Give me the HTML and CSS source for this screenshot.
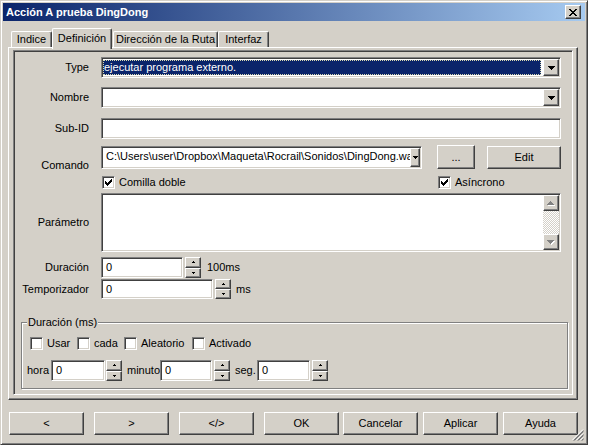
FILE: index.html
```html
<!DOCTYPE html>
<html lang="es">
<head>
<meta charset="utf-8">
<title>Acción A prueba DingDong</title>
<link rel="stylesheet" href="styles.css">
</head>
<body>
<div class="window">
  <div class="titlebar">
    <span class="title">Acción A prueba DingDong</span>
    <span class="close raised"><svg width="8" height="7" viewBox="0 0 8 7"><path d="M0 0h2v1H0zM6 0h2v1H6zM1 1h2v1H1zM5 1h2v1H5zM2 2h4v1H2zM3 3h2v1H3zM2 4h4v1H2zM1 5h2v1H1zM5 5h2v1H5zM0 6h2v1H0zM6 6h2v1H6z"/></svg></span>
  </div>

  <div class="tabs">
    <div class="tab w-ind">Indice</div>
    <div class="tab sel w-def">Definición</div>
    <div class="tab w-dir">Dirección de la Ruta</div>
    <div class="tab w-int">Interfaz</div>
  </div>

  <div class="panel raised">
    <div class="page">
      <div class="row h21">
        <div class="lbl">Type</div>
        <div class="combo sunken w460">
          <div class="combo-val selected"><span class="focus">ejecutar programa externo.</span></div>
          <div class="drop raised"><svg width="7" height="4" viewBox="0 0 7 4"><path d="M0 0h7v1H0zM1 1h5v1H1zM2 2h3v1H2zM3 3h1v1H3z"/></svg></div>
        </div>
      </div>

      <div class="row h21 mt9">
        <div class="lbl">Nombre</div>
        <div class="combo sunken w460">
          <div class="combo-val"></div>
          <div class="drop raised"><svg width="7" height="4" viewBox="0 0 7 4"><path d="M0 0h7v1H0zM1 1h5v1H1zM2 2h3v1H2zM3 3h1v1H3z"/></svg></div>
        </div>
      </div>

      <div class="row h21 mt10">
        <div class="lbl">Sub-ID</div>
        <div class="field sunken w460"></div>
      </div>

      <div class="row h24 mt6">
        <div class="lbl lbl-low">Comando</div>
        <div class="combo sunken cmd">
          <div class="combo-val path">C:\Users\user\Dropbox\Maqueta\Rocrail\Sonidos\DingDong.wav</div>
          <div class="drop narrow raised"><svg width="5" height="3" viewBox="0 0 5 3"><path d="M0 0h5v1H0zM1 1h3v1H1zM2 2h1v1H2z"/></svg></div>
        </div>
        <div class="btn raised dots">...</div>
        <div class="btn raised edit">Edit</div>
      </div>

      <div class="row h15 mt6 indent">
        <div class="check w-comilla"><span class="cb sunken"><svg width="7" height="7" viewBox="0 0 7 7"><path d="M0 2h1v3H0zM1 3h1v3H1zM2 4h1v3H2zM3 3h1v3H3zM4 2h1v3H4zM5 1h1v3H5zM6 0h1v3H6z"/></svg></span><span>Comilla doble</span></div>
        <div class="check"><span class="cb sunken"><svg width="7" height="7" viewBox="0 0 7 7"><path d="M0 2h1v3H0zM1 3h1v3H1zM2 4h1v3H2zM3 3h1v3H3zM4 2h1v3H4zM5 1h1v3H5zM6 0h1v3H6z"/></svg></span><span>Asíncrono</span></div>
      </div>

      <div class="row h59 mt3">
        <div class="lbl">Parámetro</div>
        <div class="textarea sunken w460">
          <div class="vscroll">
            <div class="sb-btn raised"><svg width="8" height="5" viewBox="0 0 8 5"><path fill="#fff" d="M4 1h1v1H4zM3 2h3v1H3zM2 3h5v1H2zM1 4h7v1H1z"/><path fill="#808080" d="M3 0h1v1H3zM2 1h3v1H2zM1 2h5v1H1zM0 3h7v1H0z"/></svg></div>
            <div class="sb-track"></div>
            <div class="sb-btn raised"><svg width="8" height="5" viewBox="0 0 8 5"><path fill="#fff" d="M1 1h7v1H1zM2 2h5v1H2zM3 3h3v1H3zM4 4h1v1H4z"/><path fill="#808080" d="M0 0h7v1H0zM1 1h5v1H1zM2 2h3v1H2zM3 3h1v1H3z"/></svg></div>
          </div>
        </div>
      </div>

      <div class="row h21 mt5">
        <div class="lbl">Duración</div>
        <div class="field sunken w82">0</div>
        <div class="spin ml2">
          <div class="spin-btn raised"><svg width="3" height="2" viewBox="0 0 3 2"><path d="M1 0h1v1H1zM0 1h3v1H0z"/></svg></div>
          <div class="spin-btn raised"><svg width="3" height="2" viewBox="0 0 3 2"><path d="M0 0h3v1H0zM1 1h1v1H1z"/></svg></div>
        </div>
        <span class="unit ml6">100ms</span>
      </div>

      <div class="row h20 mt1">
        <div class="lbl">Temporizador</div>
        <div class="field sunken w112">0</div>
        <div class="spin ml2">
          <div class="spin-btn raised"><svg width="3" height="2" viewBox="0 0 3 2"><path d="M1 0h1v1H1zM0 1h3v1H0z"/></svg></div>
          <div class="spin-btn raised"><svg width="3" height="2" viewBox="0 0 3 2"><path d="M0 0h3v1H0zM1 1h1v1H1z"/></svg></div>
        </div>
        <span class="unit ml5">ms</span>
      </div>

      <div class="group">
        <span class="group-title">Duración (ms)</span>
        <div class="row h13 mt14 gpad-checks">
          <div class="check w47"><span class="cb sunken"></span><span>Usar</span></div>
          <div class="check w47"><span class="cb sunken"></span><span>cada</span></div>
          <div class="check w68"><span class="cb sunken"></span><span>Aleatorio</span></div>
          <div class="check"><span class="cb sunken"></span><span>Activado</span></div>
        </div>
        <div class="row h21 mt10 gpad-inputs">
          <span class="glbl w24">hora</span>
          <div class="field sunken w54">0</div>
          <div class="spin ml1">
            <div class="spin-btn raised"><svg width="3" height="2" viewBox="0 0 3 2"><path d="M1 0h1v1H1zM0 1h3v1H0z"/></svg></div>
            <div class="spin-btn raised"><svg width="3" height="2" viewBox="0 0 3 2"><path d="M0 0h3v1H0zM1 1h1v1H1z"/></svg></div>
          </div>
          <span class="glbl ml5 w33">minuto</span>
          <div class="field sunken w52">0</div>
          <div class="spin ml2">
            <div class="spin-btn raised"><svg width="3" height="2" viewBox="0 0 3 2"><path d="M1 0h1v1H1zM0 1h3v1H0z"/></svg></div>
            <div class="spin-btn raised"><svg width="3" height="2" viewBox="0 0 3 2"><path d="M0 0h3v1H0zM1 1h1v1H1z"/></svg></div>
          </div>
          <span class="glbl ml5 w22">seg.</span>
          <div class="field sunken w53">0</div>
          <div class="spin ml2">
            <div class="spin-btn raised"><svg width="3" height="2" viewBox="0 0 3 2"><path d="M1 0h1v1H1zM0 1h3v1H0z"/></svg></div>
            <div class="spin-btn raised"><svg width="3" height="2" viewBox="0 0 3 2"><path d="M0 0h3v1H0zM1 1h1v1H1z"/></svg></div>
          </div>
        </div>
      </div>
    </div>
  </div>

  <div class="btnrow">
    <div class="bgrp">
      <div class="btn raised bbtn">&lt;</div>
      <div class="btn raised bbtn">&gt;</div>
      <div class="btn raised bbtn">&lt;/&gt;</div>
      <div class="btn raised bbtn">OK</div>
    </div>
    <div class="bgrp2">
      <div class="btn raised bbtn">Cancelar</div>
      <div class="btn raised bbtn">Aplicar</div>
      <div class="btn raised bbtn">Ayuda</div>
    </div>
  </div>

  <svg class="grip" width="12" height="12" viewBox="0 0 12 12">
    <path d="M11 0.5L0.5 11 M11 4.5L4.5 11 M11 8.5L8.5 11" stroke="#fff" fill="none"/>
    <path d="M11.5 1.5L1.5 11.5 M11.5 2.5L2.5 11.5 M11.5 5.5L5.5 11.5 M11.5 6.5L6.5 11.5 M11.5 9.5L9.5 11.5 M11.5 10.5L10.5 11.5" stroke="#808080" fill="none"/>
  </svg>
</div>
</body>
</html>
```

FILE: styles.css
```css
* { box-sizing: border-box; }
html, body { margin: 0; padding: 0; background: #fff; }
body { font: 11px/13px "Liberation Sans", Arial, sans-serif; color: #000; }
svg { display: block; }

.raised {
  background: #D4D0C8;
  border: 1px solid;
  border-color: #fff #404040 #404040 #fff;
  box-shadow: inset -1px -1px #808080;
}
.sunken {
  background: #fff;
  border: 1px solid;
  border-color: #808080 #fff #fff #808080;
  box-shadow: inset 1px 1px #404040, inset -1px -1px #D4D0C8;
}

.window {
  position: relative;
  width: 588px;
  height: 445px;
  background: #D4D0C8;
  border: 1px solid;
  border-color: #D4D0C8 #404040 #404040 #D4D0C8;
  box-shadow: inset 1px 1px #fff, inset -1px -1px #808080;
  padding: 2px;
}

.titlebar {
  height: 18px;
  display: flex;
  align-items: center;
  justify-content: space-between;
  padding: 0 4px 0 3px;
  background: linear-gradient(to right, #0A246A, #A6CAF0);
}
.title { color: #fff; font-weight: bold; }
.close {
  width: 16px;
  height: 14px;
  display: flex;
  align-items: center;
  justify-content: center;
}

.tabs {
  position: relative;
  z-index: 1;
  display: flex;
  align-items: flex-end;
  height: 20px;
  margin-top: 7px;
  padding-left: 8px;
}
.tab {
  height: 16px;
  margin-bottom: 1px;
  background: #D4D0C8;
  border: 1px solid;
  border-bottom: 0;
  border-color: #fff #404040 #404040 #fff;
  border-radius: 2px 2px 0 0;
  box-shadow: inset -1px 0 #808080;
  display: flex;
  align-items: center;
  justify-content: center;
  white-space: nowrap;
}
.tab.sel { height: 21px; margin-bottom: -1px; padding-bottom: 2px; }
.w-ind { width: 41px; }
.w-def { width: 60px; }
.w-dir { width: 105px; margin-left: 1px; }
.w-int { width: 51px; }

.panel {
  margin: -1px 7px 0 5px;
  height: 353px;
  padding: 2px 4px 4px 4px;
}
.page {
  height: 100%;
  display: flex;
  flex-direction: column;
  padding-top: 6px;
  border: 1px solid;
  border-color: #808080 #fff #fff #808080;
  box-shadow: inset 1px 1px #404040, inset -1px -1px #D4D0C8;
}

.row { display: flex; align-items: center; flex-shrink: 0; white-space: nowrap; }
.h13 { height: 13px; }
.h15 { height: 15px; }
.h20 { height: 20px; }
.h21 { height: 21px; }
.h24 { height: 24px; }
.h59 { height: 59px; }
.mt1 { margin-top: 1px; }
.mt3 { margin-top: 3px; }
.mt5 { margin-top: 5px; }
.mt6 { margin-top: 6px; }
.mt9 { margin-top: 9px; }
.mt10 { margin-top: 10px; }
.mt14 { margin-top: 14px; }
.ml1 { margin-left: 1px; }
.ml2 { margin-left: 2px; }
.ml5 { margin-left: 5px; }
.ml6 { margin-left: 6px; }

.lbl { width: 75px; margin-right: 12px; text-align: right; flex-shrink: 0; }
.lbl-low { align-self: flex-end; margin-bottom: -3px; }
.indent { padding-left: 88px; }

.w460 { width: 460px; }
.w82 { width: 82px; }
.w112 { width: 112px; }
.w54 { width: 54px; }
.w52 { width: 52px; }
.w53 { width: 53px; }
.w47 { width: 47px; }
.w68 { width: 68px; }
.w24 { width: 24px; }
.w33 { width: 33px; }
.w22 { width: 22px; }
.w-comilla { width: 336px; }

.combo {
  height: 100%;
  display: flex;
  align-items: stretch;
  padding: 1px;
  flex-shrink: 0;
}
.combo-val { flex: 1; overflow: hidden; display: flex; align-items: center; }
.combo-val.selected { margin: 1px 2px 1px 0; }
.focus {
  flex: 1;
  align-self: stretch;
  display: flex;
  align-items: center;
  padding-left: 1px;
  background: #0A246A;
  color: #fff;
  outline: 1px dotted #d8d8b0;
  outline-offset: -1px;
}
.drop {
  width: 16px;
  display: flex;
  align-items: center;
  justify-content: center;
  flex-shrink: 0;
}
.drop svg { margin: 1px 0 0 0; }
.cmd { width: 321px; height: 23px; }
.path { padding-left: 3px; align-items: flex-start; padding-top: 2px; white-space: nowrap; }
.narrow { width: 10px; }

.field {
  height: 100%;
  padding-left: 4px;
  display: flex;
  align-items: center;
  flex-shrink: 0;
}

.btn {
  display: flex;
  align-items: center;
  justify-content: center;
  flex-shrink: 0;
}
.dots { width: 38px; height: 24px; margin-left: 15px; }
.edit { width: 74px; height: 23px; margin-left: 12px; }

.check { display: flex; align-items: center; flex-shrink: 0; }
.cb {
  width: 13px;
  height: 13px;
  margin-right: 4px;
  display: flex;
  align-items: center;
  justify-content: center;
  flex-shrink: 0;
}

.textarea {
  height: 100%;
  padding: 1px;
  display: flex;
  justify-content: flex-end;
}
.vscroll { width: 16px; display: flex; flex-direction: column; }
.sb-btn {
  height: 16px;
  display: flex;
  align-items: center;
  justify-content: center;
  flex-shrink: 0;
}
.sb-track {
  flex: 1;
  background-color: #fff;
  background-image: conic-gradient(#D4D0C8 25%, #fff 0 50%, #D4D0C8 0 75%, #fff 0);
  background-size: 2px 2px;
}

.spin {
  width: 16px;
  height: 100%;
  display: flex;
  flex-direction: column;
  flex-shrink: 0;
}
.spin-btn {
  flex: 1;
  display: flex;
  align-items: center;
  justify-content: center;
}

.group {
  position: relative;
  margin: 23px 4px 0 7px;
  padding-bottom: 7px;
  border: 1px solid #808080;
  box-shadow: inset 1px 1px #fff, 1px 1px #fff;
}
.group-title {
  position: absolute;
  top: -7px;
  left: 5px;
  padding: 0 1px;
  background: #D4D0C8;
  line-height: 13px;
}
.gpad-checks { padding-left: 8px; }
.gpad-inputs { padding-left: 5px; }
.glbl { flex-shrink: 0; }

.btnrow {
  display: flex;
  margin-top: 12px;
  padding-left: 6px;
  height: 23px;
}
.bgrp { display: flex; gap: 10px; }
.bgrp2 { display: flex; gap: 5px; margin-left: 4px; }
.bbtn { width: 75px; height: 23px; }

.grip { position: absolute; right: 3px; bottom: 3px; }
```
